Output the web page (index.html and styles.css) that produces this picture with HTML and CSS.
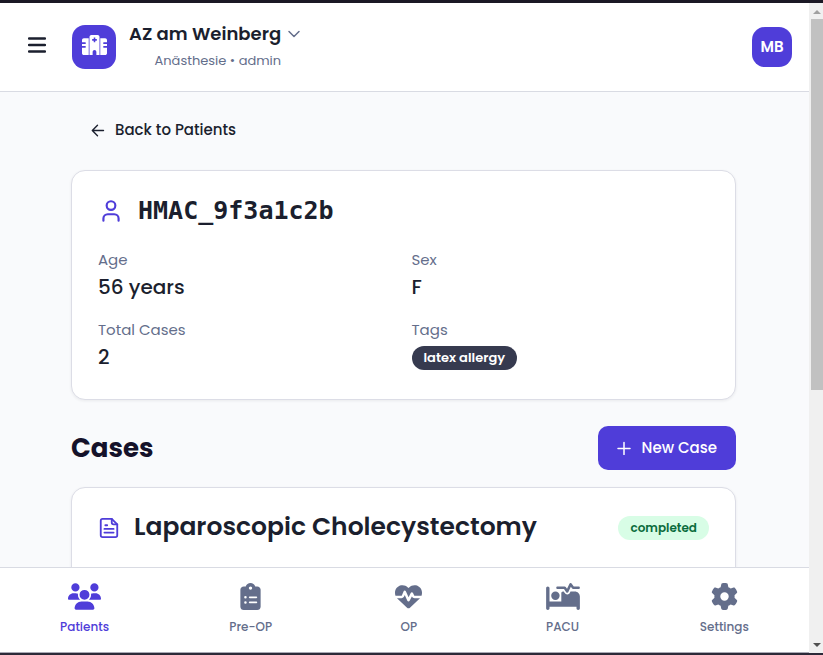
FILE: index.html
```html
<!DOCTYPE html>
<html lang="en">
<head>
<meta charset="utf-8">
<title>AZ am Weinberg – Patient</title>
<link rel="stylesheet" href="styles.css">
</head>
<body>
<div class="window">
  <div class="app">
    <header class="topbar">
      <button class="menu" aria-label="Menu"><svg width="18" height="16" viewBox="0 0 18 16"><path d="M1 1.500h16M1 8h16M1 14.500h16" stroke="currentColor" stroke-width="2.400" stroke-linecap="round"/></svg></button>
      <div class="logo"><svg width="25" height="20" viewBox="0 0 640 512" fill="currentColor"><path d="M192 48c0-26.500 21.500-48 48-48H400c26.500 0 48 21.500 48 48V512H368V432c0-26.500-21.500-48-48-48s-48 21.500-48 48v80H192V48zM48 80H172V512H48c-26.500 0-48-21.500-48-48V324H80c11 0 20-9 20-20s-9-20-20-20H0V228H80c11 0 20-9 20-20s-9-20-20-20H0V128c0-26.500 21.500-48 48-48zm544 0c26.500 0 48 21.500 48 48v60H560c-11 0-20 9-20 20s9 20 20 20h80v56H560c-11 0-20 9-20 20s9 20 20 20h80V464c0 26.500-21.500 48-48 48H468V80H592zM300 64v40H260v40h40v40h40V144h40V104H340V64z"/></svg></div>
      <button class="site">
        <span class="site-text"><span class="site-name">AZ am Weinberg</span><span class="site-role">Anästhesie • admin</span></span>
        <svg class="chevron" width="14" height="14" viewBox="0 0 14 14"><path d="M2 4.500l5 5 5-5" fill="none" stroke="currentColor" stroke-width="1.500" stroke-linecap="round" stroke-linejoin="round"/></svg>
      </button>
      <button class="avatar">MB</button>
    </header>
    <main class="content">
      <a class="back" href="#"><svg width="14" height="14" viewBox="0 0 14 14"><path d="M12.500 7.500h-11M6.500 2.300L1.300 7.500l5.200 5.200" fill="none" stroke="currentColor" stroke-width="1.400" stroke-linecap="round" stroke-linejoin="round"/></svg>Back to Patients</a>
      <section class="card summary">
        <h1 class="patient"><svg width="26" height="26" viewBox="0 0 24 24" fill="none" stroke="currentColor" stroke-width="2" stroke-linecap="round" stroke-linejoin="round"><path d="M19 21v-2a4 4 0 0 0-4-4H9a4 4 0 0 0-4 4v2"/><circle cx="12" cy="7" r="4"/></svg>HMAC_9f3a1c2b</h1>
        <dl class="facts">
          <div><dt>Age</dt><dd>56 years</dd></div>
          <div><dt>Sex</dt><dd>F</dd></div>
          <div><dt>Total Cases</dt><dd>2</dd></div>
          <div><dt>Tags</dt><dd class="tags"><span class="pill dark">latex allergy</span></dd></div>
        </dl>
      </section>
      <div class="section-head">
        <h2>Cases</h2>
        <button class="primary"><svg width="14" height="14" viewBox="0 0 14 14"><path d="M7 1.500v12M1 7.500h12" stroke="currentColor" stroke-width="1.500" stroke-linecap="round"/></svg>New Case</button>
      </div>
      <section class="card case">
        <svg class="doc" width="22" height="22" viewBox="0 0 24 24" fill="none" stroke="currentColor" stroke-width="2" stroke-linecap="round" stroke-linejoin="round"><path d="M15 2H5a2 2 0 0 0-2 2v16a2 2 0 0 0 2 2h14a2 2 0 0 0 2-2V8z"/><path d="M15 2v4a2 2 0 0 0 2 2h4M10 9H8M17 13H7M17 17H7"/></svg>
        <h3>Laparoscopic Cholecystectomy</h3>
        <span class="pill green">completed</span>
      </section>
    </main>
    <nav class="tabs">
      <a class="active" href="#"><svg width="33" height="27" viewBox="0 0 640 512" fill="currentColor"><path d="M144 0a80 80 0 1 1 0 160A80 80 0 1 1 144 0zM512 0a80 80 0 1 1 0 160A80 80 0 1 1 512 0zM0 298.700C0 239.800 47.800 192 106.700 192h42.700c15.900 0 31 3.500 44.600 9.700c-1.300 7.200-1.900 14.700-1.900 22.300c0 38.200 16.800 72.500 43.300 96H21.300C9.600 320 0 310.400 0 298.700zM405.300 320h-.7c26.600-23.500 43.300-57.800 43.300-96c0-7.600-.7-15-1.900-22.300c13.600-6.300 28.700-9.700 44.600-9.700h42.700C592.200 192 640 239.800 640 298.700c0 11.800-9.600 21.300-21.300 21.300H405.300zM224 224a96 96 0 1 1 192 0 96 96 0 1 1 -192 0zM128 485.300C128 411.700 187.700 352 261.300 352H378.700C452.300 352 512 411.700 512 485.300c0 14.700-11.900 26.700-26.700 26.700H154.700c-14.700 0-26.700-11.900-26.700-26.700z"/></svg>Patients</a>
      <a href="#"><svg width="21" height="27" viewBox="0 0 384 512" fill="currentColor"><path d="M192 0c-41.800 0-77.400 26.700-90.500 64H64C28.700 64 0 92.700 0 128V448c0 35.300 28.700 64 64 64H320c35.300 0 64-28.700 64-64V128c0-35.300-28.700-64-64-64H282.500C269.400 26.700 233.800 0 192 0zm0 64a32 32 0 1 1 0 64 32 32 0 1 1 0-64zM72 272a24 24 0 1 1 48 0 24 24 0 1 1 -48 0zm104-16H304c8.800 0 16 7.200 16 16s-7.200 16-16 16H176c-8.800 0-16-7.200-16-16s7.200-16 16-16zM72 368a24 24 0 1 1 48 0 24 24 0 1 1 -48 0zm88 0c0-8.800 7.200-16 16-16H304c8.800 0 16 7.200 16 16s-7.200 16-16 16H176c-8.800 0-16-7.200-16-16z"/></svg>Pre-OP</a>
      <a href="#"><svg width="27" height="27" viewBox="0 0 512 512" fill="currentColor"><path d="M228.300 469.100L47.600 300.400c-4.200-3.900-8.200-8.100-11.900-12.400h87c22.600 0 43-13.600 51.700-34.500l10.500-25.200 49.300 109.500c3.800 8.500 12.100 14 21.400 14.100s17.800-5 22-13.300L320 253.700l1.700 3.400c9.500 19 28.900 31 50.100 31H476.300c-3.700 4.300-7.700 8.500-11.900 12.400L283.700 469.100c-7.500 7-17.400 10.900-27.700 10.900s-20.200-3.900-27.700-10.900zM503.700 240h-132c-3 0-5.800-1.700-7.200-4.400l-23.200-46.300c-4.100-8.100-12.400-13.300-21.500-13.300s-17.400 5.100-21.500 13.300l-41.400 82.800L205.900 158.200c-3.900-8.700-12.700-14.300-22.200-14.100s-18.100 5.900-21.800 14.800l-31.800 76.300c-1.200 3-4.200 4.900-7.400 4.900H16c-2.600 0-5 .4-7.300 1.100C3 225.200 0 208.200 0 190.900v-5.800c0-69.900 50.500-129.500 119.400-141C165 36.500 211.400 51.400 244 84l12 12 12-12c32.600-32.600 79-47.500 124.600-39.900C461.500 55.600 512 115.200 512 185.100v5.800c0 16.900-2.800 33.500-8.300 49.100z"/></svg>OP</a>
      <a href="#"><svg width="34" height="27" viewBox="0 0 640 512" fill="currentColor"><path d="M483.200 9.600L524 64h92c13.300 0 24 10.700 24 24s-10.700 24-24 24H512c-7.600 0-14.700-3.600-19.200-9.600L468.700 70.300l-47 99.900c-3.700 7.800-11.300 13.100-19.900 13.700s-16.900-3.400-21.700-10.600L339.200 112H216c-13.300 0-24-10.700-24-24s10.700-24 24-24H352c8 0 15.500 4 20 10.700l24.400 36.600 45.900-97.500C445.900 6.200 453.200 1 461.600 .1s16.600 2.700 21.600 9.500zM320 160h12.700l20.700 31.100c11.200 16.800 30.600 26.300 50.700 24.800s37.900-13.700 46.500-32L461.900 160H544c53 0 96 43 96 96V480c0 17.700-14.300 32-32 32s-32-14.300-32-32V448H64v32c0 17.700-14.300 32-32 32s-32-14.300-32-32V96C0 78.300 14.300 64 32 64s32 14.300 32 32V352H288V192c0-17.700 14.300-32 32-32zm-144 0a80 80 0 1 1 0 160 80 80 0 1 1 0-160z"/></svg>PACU</a>
      <a href="#"><svg width="27" height="27" viewBox="0 0 512 512" fill="currentColor"><path d="M495.900 166.600c3.200 8.700 .5 18.400-6.400 24.600l-43.300 39.400c1.100 8.300 1.700 16.800 1.700 25.400s-.6 17.100-1.700 25.400l43.300 39.400c6.900 6.200 9.600 15.900 6.400 24.600c-4.400 11.900-9.700 23.300-15.800 34.300l-4.700 8.100c-6.600 11-14 21.400-22.100 31.200c-5.900 7.200-15.700 9.600-24.500 6.800l-55.700-17.700c-13.400 10.300-28.200 18.900-44 25.400l-12.500 57.100c-2 9.100-9 16.300-18.200 17.800c-13.800 2.300-28 3.500-42.500 3.500s-28.700-1.200-42.500-3.500c-9.200-1.500-16.200-8.700-18.200-17.800l-12.500-57.100c-15.800-6.500-30.600-15.100-44-25.400L83.100 425.900c-8.800 2.800-18.600 .3-24.500-6.800c-8.100-9.800-15.500-20.200-22.100-31.200l-4.700-8.100c-6.100-11-11.400-22.400-15.800-34.300c-3.200-8.700-.5-18.400 6.400-24.600l43.300-39.400C64.600 273.100 64 264.600 64 256s.6-17.100 1.700-25.400L22.400 191.200c-6.900-6.200-9.600-15.900-6.400-24.600c4.400-11.900 9.700-23.300 15.800-34.300l4.700-8.100c6.600-11 14-21.400 22.100-31.200c5.900-7.200 15.700-9.600 24.500-6.800l55.700 17.700c13.400-10.300 28.200-18.900 44-25.400l12.500-57.100c2-9.100 9-16.300 18.200-17.800C227.300 1.200 241.500 0 256 0s28.700 1.200 42.500 3.500c9.200 1.500 16.200 8.700 18.200 17.800l12.500 57.100c15.800 6.500 30.600 15.100 44 25.400l55.700-17.700c8.800-2.800 18.600-.3 24.500 6.800c8.100 9.800 15.500 20.200 22.100 31.200l4.700 8.100c6.100 11 11.400 22.400 15.800 34.300zM256 336a80 80 0 1 0 0-160 80 80 0 1 0 0 160z"/></svg>Settings</a>
    </nav>
  </div>
  <div class="scrollbar" aria-hidden="true">
    <svg width="10" height="16" viewBox="0 0 10 16"><path d="M1 11l4-4 4 4z" fill="#a0a0a0"/></svg>
    <div class="thumb"></div>
    <svg width="10" height="16" viewBox="0 0 10 16"><path d="M1 6l4 4 4-4z" fill="#505050"/></svg>
  </div>
</div>
</body>
</html>
```
FILE: styles.css
```css
* { box-sizing: border-box; }
body {
  margin: 0;
  font-family: Poppins, Inter, sans-serif;
  font-size: 15px;
  line-height: 24px;
  color: #1b1f2e;
}
svg { flex: none; display: block; }
button { font: inherit; color: inherit; border: 0; padding: 0; background: none; }
a { color: inherit; text-decoration: none; }
h1, h2, h3, dl, dd { margin: 0; }

.window {
  display: flex;
  height: 100vh;
  border-top: 3px solid #1b1825;
  border-bottom: 2px solid #2c2938;
}
.app { flex: 1; min-width: 0; display: flex; flex-direction: column; background: #f9fafc; }

.topbar {
  flex: none;
  display: flex;
  align-items: center;
  height: 89px;
  padding: 0 17px 0 28px;
  background: #fff;
  border-bottom: 1px solid #d9dbe3;
}
.menu { margin-bottom: 4px; }
.logo {
  display: grid;
  place-items: center;
  width: 44px;
  height: 44px;
  padding-bottom: 4px;
  margin: 0 13px 0 26px;
  border-radius: 13px;
  background: #4f3dd9;
  color: #fff;
}
.site { display: flex; align-items: flex-start; gap: 6px; color: #646e8b; }
.site-text { display: flex; flex-direction: column; align-items: flex-end; gap: 3px; }
.site-name { font-size: 18px; font-weight: 600; color: #1b1f2e; }
.site-role { font-size: 13px; }
.chevron { margin-top: 5px; }
.avatar {
  width: 40px;
  height: 40px;
  margin-left: auto;
  border-radius: 13px;
  background: #4f3dd9;
  color: #fff;
  font-weight: 600;
}

.content { flex: 1; min-height: 0; overflow: hidden; padding: 26px 73px 0 71px; }
.back { display: flex; align-items: center; gap: 10px; padding-left: 20px; font-weight: 500; }

.card {
  padding: 26px;
  background: #fff;
  border: 1px solid #dcdde6;
  border-radius: 14px;
  box-shadow: 0 1px 3px #1b1f2e12;
}
.summary { margin-top: 28px; padding-bottom: 28px; }
.patient {
  display: flex;
  align-items: center;
  gap: 14px;
  font: bold 25px/28px "DejaVu Sans Mono", monospace;
}
.patient svg, .doc { color: #4f3dd9; }
.facts { display: grid; grid-template-columns: 1fr 1fr; gap: 16px; margin-top: 22px; }
dt { color: #646e8b; line-height: 26px; }
dd { font-size: 20px; line-height: 28px; font-weight: 500; }
.tags { display: flex; padding-top: 3px; }
.pill {
  padding: 0 12px;
  border-radius: 12px;
  font-size: 13px;
  line-height: 24px;
  font-weight: 600;
}
.dark { background: #363a4f; color: #fff; }
.green { margin-left: auto; background: #d8fde6; color: #0b6c3c; font-size: 12px; }

.section-head { display: flex; align-items: center; justify-content: space-between; margin-top: 26px; }
h2 { font-size: 26px; line-height: 42px; font-weight: 700; color: #15122a; }
.primary {
  display: flex;
  align-items: center;
  gap: 11px;
  height: 44px;
  padding: 0 19px;
  border-radius: 10px;
  background: #4f3dd9;
  color: #fff;
  font-weight: 500;
}
.case { display: flex; align-items: flex-start; gap: 14px; height: 140px; margin-top: 17px; padding-top: 22px; }
.doc { margin-top: 7px; }
.case .pill { margin-top: 6px; }
h3 { font-size: 25px; line-height: 34px; font-weight: 600; }

.tabs {
  flex: none;
  display: flex;
  justify-content: space-around;
  height: 86px;
  padding-top: 15px;
  background: #fff;
  border-top: 1px solid #d9dbe3;
  border-bottom: 1px solid #a9a9b4;
}
.tabs a {
  display: flex;
  flex-direction: column;
  align-items: center;
  gap: 8px;
  min-width: 33px;
  font-size: 12px;
  line-height: 18px;
  font-weight: 500;
  color: #646e8b;
}
.tabs .active { color: #4f3dd9; }

.scrollbar {
  width: 14px;
  display: flex;
  flex-direction: column;
  align-items: center;
  padding-left: 2px;
  background: #f0f0f0;
}
.thumb { width: 100%; height: 57%; margin-bottom: auto; background: #c1c1c1; }
```
